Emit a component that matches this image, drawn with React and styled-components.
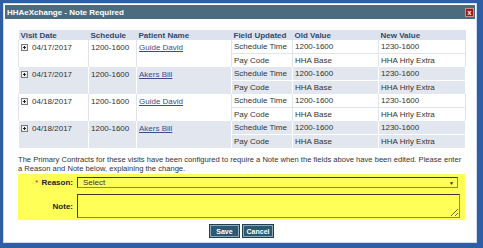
import styled, { createGlobalStyle } from 'styled-components';

const Global = createGlobalStyle`
  html, body { margin: 0; padding: 0; }
  body {
    width: 483px;
    height: 248px;
    overflow: hidden;
    background: #2e5fa6;
    font-family: "Liberation Sans", Arial, sans-serif;
  }
`

const Frame = styled.div`
  width: 483px;
  height: 248px;
  box-sizing: border-box;
  padding: 3px 6px 5px 3px;
  background: #2e5fa6;
`
const Panel = styled.div`
  height: 100%;
  box-sizing: border-box;
  border: 1px solid #cfdbea;
  padding: 1px;
  background: #fff;
  display: flex;
  flex-direction: column;
`
const TitleBar = styled.div`
  height: 14px;
  background: #4b6b7f;
  display: flex;
  align-items: center;
  justify-content: space-between;
  padding: 0 1px 0 2px;
`
const Title = styled.span`
  color: #fff;
  font-size: 8px;
  font-weight: bold;
`
const Close = styled.div`
  width: 9px;
  height: 9px;
  box-sizing: border-box;
  background: #a31a18;
  border: 1px solid #d88a80;
  color: #fff;
  font-size: 7px;
  font-weight: bold;
  line-height: 7px;
  text-align: center;
`
const Content = styled.div`
  padding: 11px 10px 0 13px;
  display: flex;
  flex-direction: column;
`
const Table = styled.table`
  width: 447px;
  border-collapse: collapse;
  table-layout: fixed;
  font-size: 8px;
  color: #333;
`
const Th = styled.th`
  height: 10px;
  padding: 0 0 0 2px;
  background: #dde3ee;
  color: #2f4a6c;
  font-weight: bold;
  text-align: left;
  white-space: nowrap;
`
const Td = styled.td`
  height: 13px;
  padding: 0 0 0 2px;
  background: ${p => (p.$alt ? '#e1e6ef' : '#fff')};
  border-right: 1px solid ${p => (p.$alt ? '#fff' : '#dfe4ed')};
  border-left: 1px solid ${p => (p.$alt ? '#fff' : '#dfe4ed')};
  border-bottom: ${p => (p.$split ? '1px solid ' + (p.$alt ? '#fff' : '#dfe4ed') : 'none')};
  vertical-align: ${p => (p.$top ? 'top' : 'middle')};
  padding-top: ${p => (p.$top ? '3px' : '0')};
  white-space: nowrap;
`
const DateCell = styled.span`
  display: inline-flex;
  align-items: center;
  gap: 4px;
`
const Link = styled.a`
  color: #3e4b8c;
  text-decoration: underline;
  cursor: pointer;
`
const Message = styled.p`
  margin: 7px 0 1px;
  font-size: 7.6px;
  line-height: 9px;
  color: #333;
  width: 447px;
`
const Form = styled.div`
  width: 447px;
  box-sizing: border-box;
  background: #ffff57;
  padding: 3px 5px 2px 0;
  display: grid;
  grid-template-columns: 55px 1fr;
  column-gap: 4px;
  row-gap: 6px;
  align-items: center;
`
const Label = styled.label`
  font-size: 8px;
  font-weight: bold;
  color: #222;
  text-align: right;
`
const Star = styled.span`
  color: #e02020;
  font-weight: normal;
  margin-right: 3px;
`
const SelectBox = styled.div`
  height: 11px;
  margin-right: 2px;
  box-sizing: border-box;
  border: 1px solid #3c3c2a;
  border-right-color: #8a8a50;
  border-bottom-color: #8a8a50;
  display: flex;
  align-items: center;
  justify-content: space-between;
  padding: 0 3px 0 5px;
  font-size: 8px;
  color: #333;
`
const Arrow = styled.span`
  font-size: 5px;
  color: #222;
`
const NoteArea = styled.textarea`
  height: 24px;
  box-sizing: border-box;
  background: #ffff57;
  border: 1px solid #3c3c2a;
  border-right-color: #8a8a50;
  border-bottom-color: #8a8a50;
  margin: 0;
  padding: 1px;
  font-size: 8px;
  outline: none;
`
const Buttons = styled.div`
  display: flex;
  justify-content: center;
  gap: 4px;
  margin-top: 5px;
`
const Button = styled.button`
  width: ${p => p.$w}px;
  height: 12px;
  padding: 0;
  box-sizing: border-box;
  background: #2c5872;
  border: 1px solid #8fa9bb;
  outline: 1px solid #1e3f55;
  color: #fff;
  font-family: "Liberation Sans", Arial, sans-serif;
  font-size: 7px;
  font-weight: bold;
  cursor: pointer;
`

const ExpandIcon = () => (
  <svg width="7" height="7" viewBox="0 0 7 7">
    <rect x="0.5" y="0.5" width="6" height="6" fill="#f2f2f2" stroke="#7a7a7a" />
    <path d="M2 3.5h3M3.5 2v3" stroke="#222" strokeWidth="1" />
  </svg>
)

const visits = [
  { date: '04/17/2017', name: 'Guide David' },
  { date: '04/17/2017', name: 'Akers Bill' },
  { date: '04/18/2017', name: 'Guide David' },
  { date: '04/18/2017', name: 'Akers Bill' },
]

const App = () => {
  return (
    <Frame>
      <Global />
      <Panel>
        <TitleBar>
          <Title>HHAeXchange - Note Required</Title>
          <Close>x</Close>
        </TitleBar>
        <Content>
          <Table>
            <colgroup>
              <col style={{ width: 70 }} />
              <col style={{ width: 48 }} />
              <col style={{ width: 95 }} />
              <col style={{ width: 61 }} />
              <col style={{ width: 86 }} />
              <col style={{ width: 87 }} />
            </colgroup>
            <thead>
              <tr>
                <Th>Visit Date</Th>
                <Th>Schedule</Th>
                <Th>Patient Name</Th>
                <Th>Field Updated</Th>
                <Th>Old Value</Th>
                <Th>New Value</Th>
              </tr>
            </thead>
            {visits.map((v, i) => {
              const alt = i % 2 === 1
              return (
                <tbody key={i}>
                  <tr>
                    <Td $alt={alt} $top rowSpan={2}>
                      <DateCell><ExpandIcon />{v.date}</DateCell>
                    </Td>
                    <Td $alt={alt} $top rowSpan={2}>1200-1600</Td>
                    <Td $alt={alt} $top rowSpan={2}><Link>{v.name}</Link></Td>
                    <Td $alt={alt} $split>Schedule Time</Td>
                    <Td $alt={alt} $split>1200-1600</Td>
                    <Td $alt={alt} $split>1230-1600</Td>
                  </tr>
                  <tr>
                    <Td $alt={alt}>Pay Code</Td>
                    <Td $alt={alt}>HHA Base</Td>
                    <Td $alt={alt}>HHA Hrly Extra</Td>
                  </tr>
                </tbody>
              )
            })}
          </Table>
          <Message>
            The Primary Contracts for these visits have been configured to require a Note when the fields above have been edited. Please enter a Reason and Note below, explaining the change.
          </Message>
          <Form>
            <Label><Star>*</Star>Reason:</Label>
            <SelectBox>
              <span>Select</span>
              <Arrow>▼</Arrow>
            </SelectBox>
            <Label>Note:</Label>
            <NoteArea />
          </Form>
          <Buttons>
            <Button $w={29}>Save</Button>
            <Button $w={30}>Cancel</Button>
          </Buttons>
        </Content>
      </Panel>
    </Frame>
  )
}

export default App
